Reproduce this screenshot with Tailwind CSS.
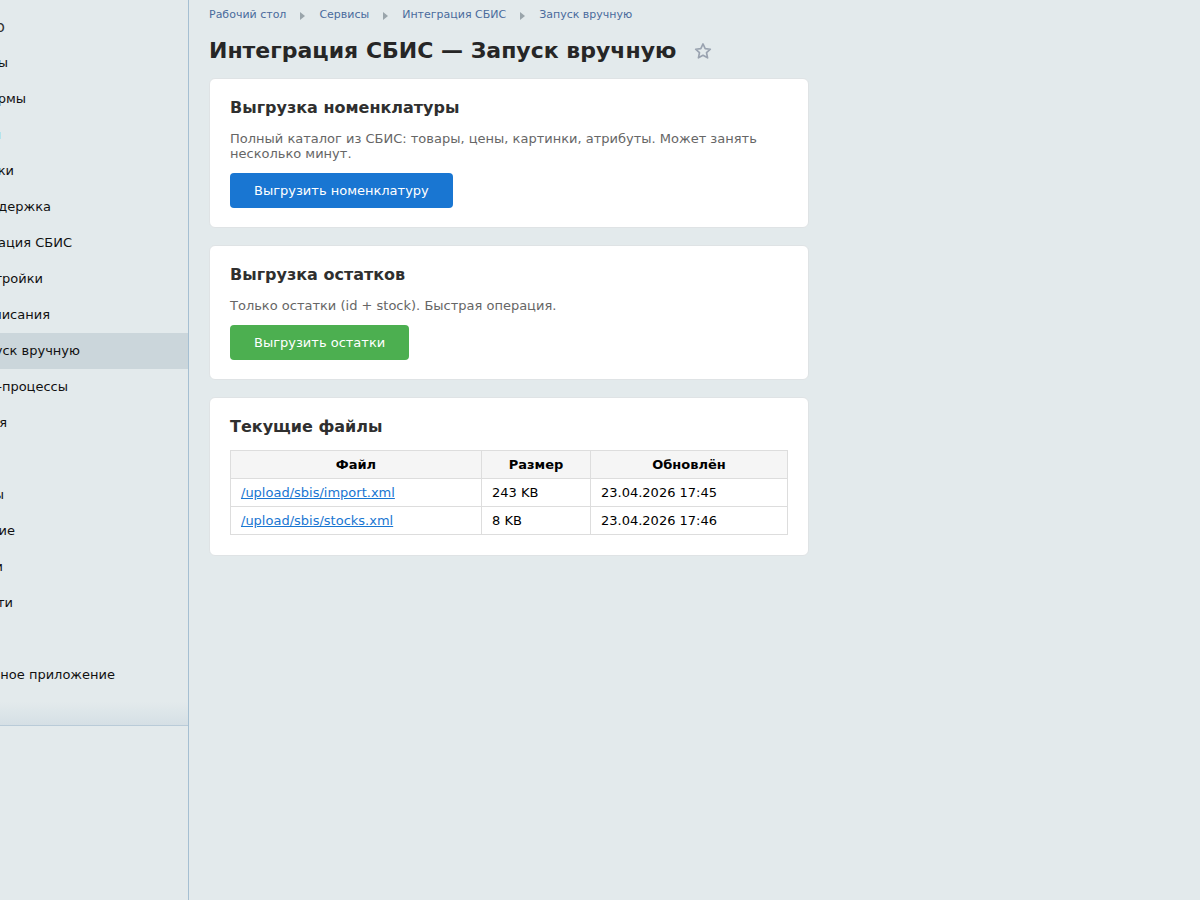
<!DOCTYPE html>
<html lang="ru">
<head>
  <meta charset="UTF-8">
  <title>Интеграция СБИС — Запуск вручную</title>
  <script src="https://cdn.jsdelivr.net/npm/@tailwindcss/browser@4"></script>
</head>
<body class="bg-[#e3eaec] font-['DejaVu_Sans',sans-serif] overflow-hidden">
  <div class="flex h-[900px] w-[1200px]">
    <!-- sidebar, scrolled to the left so the labels are cut off -->
    <aside class="w-[189px] shrink-0 border-r border-[#a5bfd2] overflow-hidden text-[13px] text-[#111]">
      <div class="h-[702px] pt-[9px] flex flex-col relative">
        <div class="h-9 flex items-center justify-end w-[5px] whitespace-nowrap text-[15px] text-[#333]">Меню</div>
        <a class="h-9 flex items-center justify-end w-[8px] whitespace-nowrap">Товары</a>
        <a class="h-9 flex items-center justify-end w-[26px] whitespace-nowrap">Веб-формы</a>
        <a class="h-9 flex items-center justify-end w-[1px] whitespace-nowrap text-[#2a8fd8]">Опросы</a>
        <a class="h-9 flex items-center justify-end w-[14px] whitespace-nowrap">Подписки</a>
        <a class="h-9 flex items-center justify-end w-[51px] whitespace-nowrap">Техподдержка</a>
        <a class="h-9 flex items-center justify-end w-[72px] whitespace-nowrap">Интеграция СБИС</a>
        <a class="h-9 flex items-center justify-end w-[43px] whitespace-nowrap">Настройки</a>
        <a class="h-9 flex items-center justify-end w-[50px] whitespace-nowrap">Расписания</a>
        <a class="h-9 flex items-center justify-end w-[188px] bg-[#cbd6db] whitespace-nowrap pr-[108px]">Запуск вручную</a>
        <a class="h-9 flex items-center justify-end w-[68px] whitespace-nowrap">Бизнес-процессы</a>
        <a class="h-9 flex items-center justify-end w-[7px] whitespace-nowrap">Журнал событий и я</a>
        <div class="h-9"></div>
        <a class="h-9 flex items-center justify-end w-[4px] whitespace-nowrap">Файлы</a>
        <a class="h-9 flex items-center justify-end w-[15px] whitespace-nowrap">Обучение</a>
        <a class="h-9 flex items-center justify-end w-[3px] whitespace-nowrap">Блоги</a>
        <a class="h-9 flex items-center justify-end w-[13px] whitespace-nowrap">Новости</a>
        <div class="h-9"></div>
        <a class="h-9 flex items-center justify-end w-[115px] whitespace-nowrap">Мобильное приложение</a>
      </div>
      <div class="h-[23px] bg-gradient-to-b from-transparent to-[#cfdbe2]/70"></div>
      <div class="border-t border-[#b9cbd8]"></div>
    </aside>

    <main class="w-[600px] ml-[20px] shrink-0">
      <nav class="flex items-center h-[31px] text-[11px] text-[#4a6b9c]">
        <a>Рабочий стол</a>
        <span class="mx-[14px] w-0 h-0 border-y-[4px] border-y-transparent border-l-[5px] border-l-[#9aa5ab]"></span>
        <a>Сервисы</a>
        <span class="mx-[14px] w-0 h-0 border-y-[4px] border-y-transparent border-l-[5px] border-l-[#9aa5ab]"></span>
        <a>Интеграция СБИС</a>
        <span class="mx-[14px] w-0 h-0 border-y-[4px] border-y-transparent border-l-[5px] border-l-[#9aa5ab]"></span>
        <a>Запуск вручную</a>
      </nav>
      <div class="flex items-center h-[38px] mb-[9px]">
        <h1 class="text-[22px] font-bold text-[#262626] whitespace-nowrap">Интеграция СБИС — Запуск вручную</h1>
        <svg class="ml-[18px] w-[18px] h-[18px] mt-[2px]" viewBox="0 0 24 24" fill="none" stroke="#9aa3b0" stroke-width="2.2" stroke-linejoin="round"><path d="M12 2.5l2.9 6.3 6.9.8-5.1 4.7 1.4 6.8-6.1-3.4-6.1 3.4 1.4-6.8L2.2 9.6l6.9-.8z"/></svg>
      </div>

      <section class="bg-white rounded-md border border-[#dfe3e5] px-5 pt-[19px] pb-[19px] mb-[17px]">
        <h2 class="text-[16px] font-bold text-[#2f2f2f] leading-[19px]">Выгрузка номенклатуры</h2>
        <p class="text-[13px] leading-[15px] text-[#666] mt-[14px] mb-[12px]">Полный каталог из СБИС: товары, цены, картинки, атрибуты. Может занять несколько минут.</p>
        <button class="h-[35px] px-6 rounded bg-[#1976d2] text-white text-[13px]">Выгрузить номенклатуру</button>
      </section>

      <section class="bg-white rounded-md border border-[#dfe3e5] px-5 pt-[19px] pb-[19px] mb-[17px]">
        <h2 class="text-[16px] font-bold text-[#2f2f2f] leading-[19px]">Выгрузка остатков</h2>
        <p class="text-[13px] leading-[15px] text-[#666] mt-[14px] mb-[12px]">Только остатки (id + stock). Быстрая операция.</p>
        <button class="h-[35px] px-6 rounded bg-[#4caf50] text-white text-[13px]">Выгрузить остатки</button>
      </section>

      <section class="bg-white rounded-md border border-[#dfe3e5] px-5 pt-[19px] pb-[20px]">
        <h2 class="text-[16px] font-bold text-[#2f2f2f] leading-[19px] mb-[14px]">Текущие файлы</h2>
        <table class="w-full border-collapse text-[13px] text-black">
          <thead>
            <tr class="bg-[#f5f5f5] h-[28px]">
              <th class="w-[251px] border border-[#ddd] font-bold">Файл</th>
              <th class="w-[109px] border border-[#ddd] font-bold">Размер</th>
              <th class="border border-[#ddd] font-bold">Обновлён</th>
            </tr>
          </thead>
          <tbody>
            <tr class="h-[28px]">
              <td class="border border-[#ddd] px-[10px]"><a class="underline text-[#1976d2]">/upload/sbis/import.xml</a></td>
              <td class="border border-[#ddd] px-[10px]">243 KB</td>
              <td class="border border-[#ddd] px-[10px]">23.04.2026 17:45</td>
            </tr>
            <tr class="h-[28px]">
              <td class="border border-[#ddd] px-[10px]"><a class="underline text-[#1976d2]">/upload/sbis/stocks.xml</a></td>
              <td class="border border-[#ddd] px-[10px]">8 KB</td>
              <td class="border border-[#ddd] px-[10px]">23.04.2026 17:46</td>
            </tr>
          </tbody>
        </table>
      </section>
    </main>
  </div>
</body>
</html>
